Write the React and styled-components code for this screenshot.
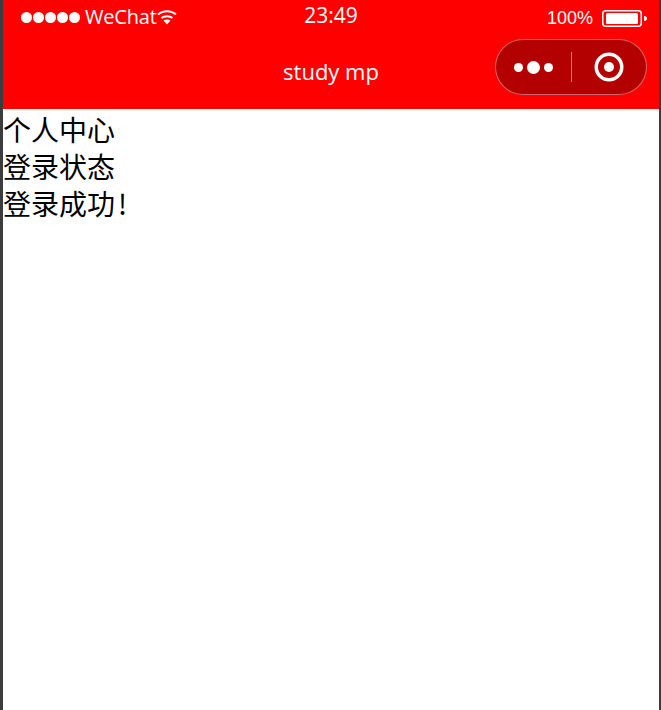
import React from 'react';
import styled, { createGlobalStyle } from 'styled-components';

const GlobalStyle = createGlobalStyle`
    html, body {
        margin: 0;
        padding: 0;
        height: 100%;
        background: #fff;
    }
    #root {
        height: 100%;
    }
`;

const Frame = styled.div`
    width: 661px;
    height: 710px;
    box-sizing: border-box;
    border-left: 3px solid #3c3c3c;
    border-right: 2px solid #3c3c3c;
    display: flex;
    flex-direction: column;
    overflow: hidden;
    background: #fff;
`;

const Header = styled.header`
    height: 109px;
    background: #ff0000;
    color: #fff;
    display: flex;
    flex-direction: column;
    font-family: "Open Sans", "Noto Sans", sans-serif;
`;

const StatusBar = styled.div`
    height: 39px;
    display: grid;
    grid-template-columns: 1fr auto 1fr;
    align-items: start;
`;

const StatusLeft = styled.div`
    display: flex;
    align-items: center;
    padding: 6px 0 0 18px;
    height: 22px;
`;

const Signal = styled.div`
    display: flex;
    gap: 1px;
    margin-right: 5px;
`;

const Dot = styled.span`
    width: 11px;
    height: 11px;
    border-radius: 50%;
    background: #fff;
`;

const Carrier = styled.span`
    font-size: 20px;
    line-height: 22px;
    letter-spacing: -0.2px;
`;

const Time = styled.div`
    font-size: 21px;
    line-height: 24px;
    padding-top: 3px;
`;

const StatusRight = styled.div`
    display: flex;
    justify-content: flex-end;
    align-items: center;
    gap: 9px;
    height: 22px;
    padding: 7px 12px 0 0;
`;

const Percent = styled.span`
    font-family: "Liberation Sans", Arial, sans-serif;
    font-size: 18px;
    line-height: 22px;
`;

const NavBar = styled.div`
    flex: 1;
    display: flex;
    justify-content: flex-end;
    align-items: flex-start;
    position: relative;
    padding-right: 12px;
`;

const Title = styled.div`
    position: absolute;
    left: 0;
    right: 0;
    top: 18px;
    text-align: center;
    font-size: 22px;
    line-height: 28px;
`;

const Capsule = styled.div`
    width: 152px;
    height: 56px;
    box-sizing: border-box;
    border: 1px solid rgba(255, 255, 255, 0.4);
    border-radius: 28px;
    background: #b30000;
    display: flex;
    align-items: center;
`;

const CapsuleHalf = styled.div`
    flex: 1;
    display: flex;
    justify-content: center;
    align-items: center;
    gap: 4px;
`;

const MenuDot = styled.span`
    width: ${(p) => p.$size}px;
    height: ${(p) => p.$size}px;
    border-radius: 50%;
    background: #fff;
`;

const Divider = styled.div`
    width: 1px;
    height: 30px;
    background: rgba(255, 255, 255, 0.5);
`;

const Content = styled.main`
    flex: 1;
    font-family: "Noto Sans CJK SC", sans-serif;
    font-weight: 400;
    font-size: 28px;
    line-height: 37px;
    color: #000;
    padding-top: 2px;
`;

const Line = styled.div``;

const Bang = styled.span`
    margin-left: 3px;
`;

const WifiIcon = () => (
    <svg width="20" height="16" viewBox="0 0 20 16" fill="none" stroke="#fff" strokeWidth="2">
        <path d="M1 5.5C6 1 14 1 19 5.5" />
        <path d="M4.5 9C7.5 6.5 12.5 6.5 15.5 9" />
        <path d="M6.5 11.5 Q10 9.5 13.5 11.5 L10 15.5 Z" fill="#fff" stroke="none" />
    </svg>
);

const BatteryIcon = () => (
    <svg width="45" height="17" viewBox="0 0 45 17">
        <rect x="0.75" y="0.75" width="38.5" height="15.5" rx="3" fill="none" stroke="#fff" strokeWidth="1.5" />
        <rect x="4" y="3" width="32" height="11" rx="1.5" fill="#fff" />
        <path d="M42 6 C44 6 45 7 45 8.5 C45 10 44 11 42 11 Z" fill="#fff" />
    </svg>
);

const TargetIcon = () => (
    <svg width="30" height="30" viewBox="0 0 30 30">
        <circle cx="15" cy="15" r="12.75" fill="none" stroke="#fff" strokeWidth="3.5" />
        <circle cx="15" cy="15" r="5" fill="#fff" />
    </svg>
);

const App = () => {
    return (
        <>
            <GlobalStyle />
            <Frame>
                <Header>
                    <StatusBar>
                        <StatusLeft>
                            <Signal>
                                {[1, 2, 3, 4, 5].map((i) => (
                                    <Dot key={i} />
                                ))}
                            </Signal>
                            <Carrier>WeChat</Carrier>
                            <WifiIcon />
                        </StatusLeft>
                        <Time>23:49</Time>
                        <StatusRight>
                            <Percent>100%</Percent>
                            <BatteryIcon />
                        </StatusRight>
                    </StatusBar>
                    <NavBar>
                        <Title>study mp</Title>
                        <Capsule>
                            <CapsuleHalf>
                                <MenuDot $size={9} />
                                <MenuDot $size={13} />
                                <MenuDot $size={9} />
                            </CapsuleHalf>
                            <Divider />
                            <CapsuleHalf>
                                <TargetIcon />
                            </CapsuleHalf>
                        </Capsule>
                    </NavBar>
                </Header>
                <Content>
                    <Line>个人中心</Line>
                    <Line>登录状态</Line>
                    <Line>登录成功<Bang>!</Bang></Line>
                </Content>
            </Frame>
        </>
    );
};

export default App;
